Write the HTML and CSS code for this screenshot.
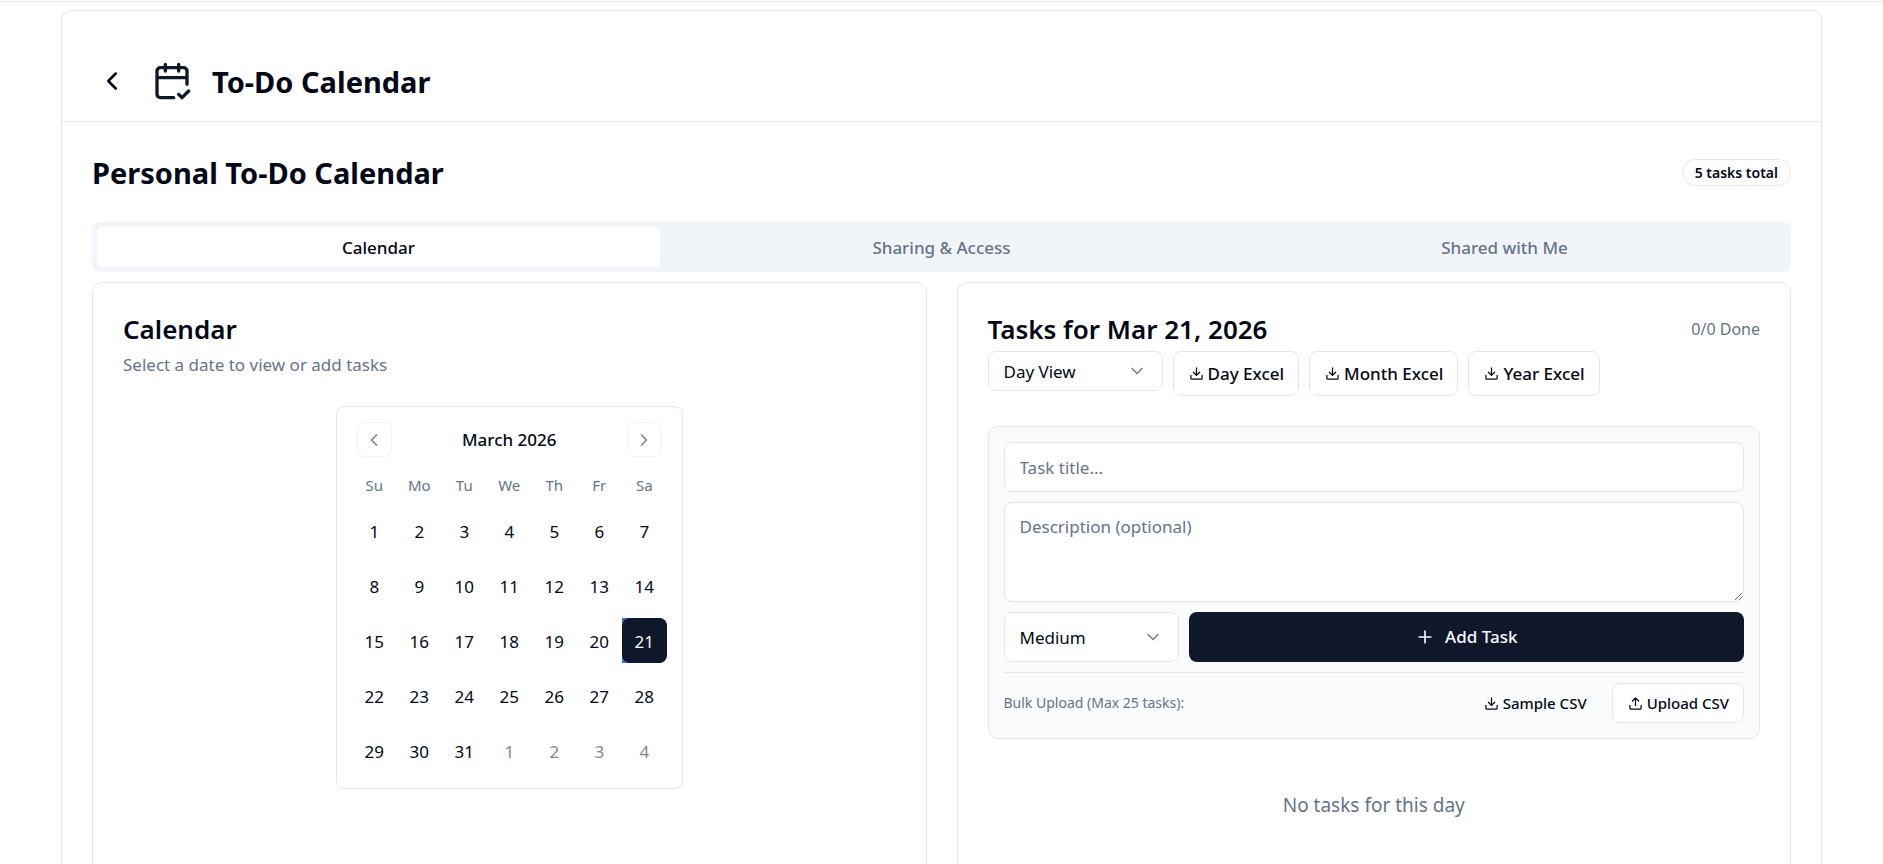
FILE: index.html
```html
<!DOCTYPE html>
<html lang="en">
<head>
<meta charset="utf-8">
<meta name="viewport" content="width=device-width, initial-scale=1">
<title>To-Do Calendar</title>
<link rel="stylesheet" href="styles.css">
</head>
<body>
<svg class="sprite" aria-hidden="true">
  <symbol id="chevron-left" viewBox="0 0 24 24"><path d="m15 18-6-6 6-6"/></symbol>
  <symbol id="chevron-right" viewBox="0 0 24 24"><path d="m9 18 6-6-6-6"/></symbol>
  <symbol id="chevron-down" viewBox="0 0 24 24"><path d="m6 9 6 6 6-6"/></symbol>
  <symbol id="calendar-check" viewBox="0 0 24 24"><path d="M8 2v4M16 2v4M21 14V6a2 2 0 0 0-2-2H5a2 2 0 0 0-2 2v14a2 2 0 0 0 2 2h8M3 10h18M16 20l2 2 4-4"/></symbol>
  <symbol id="download" viewBox="0 0 24 24"><path d="M21 15v4a2 2 0 0 1-2 2H5a2 2 0 0 1-2-2v-4M7 10l5 5 5-5M12 15V3"/></symbol>
  <symbol id="upload" viewBox="0 0 24 24"><path d="M21 15v4a2 2 0 0 1-2 2H5a2 2 0 0 1-2-2v-4M17 8l-5-5-5 5M12 3v12"/></symbol>
  <symbol id="plus" viewBox="0 0 24 24"><path d="M5 12h14M12 5v14"/></symbol>
</svg>
<div class="page">
  <main class="shell">
    <header class="shell-header">
      <button class="back" type="button" aria-label="Back"><svg class="icon icon-md"><use href="#chevron-left"/></svg></button>
      <svg class="icon icon-xl"><use href="#calendar-check"/></svg>
      <h1 class="heading">To-Do Calendar</h1>
    </header>
    <div class="shell-body">
      <div class="title-row">
        <h2 class="heading">Personal To-Do Calendar</h2>
        <span class="badge">5 tasks total</span>
      </div>
      <div class="tabs" role="tablist">
        <button class="tab tab-active" type="button" role="tab" aria-selected="true">Calendar</button>
        <button class="tab" type="button" role="tab" aria-selected="false">Sharing &amp; Access</button>
        <button class="tab" type="button" role="tab" aria-selected="false">Shared with Me</button>
      </div>
      <div class="columns">
        <section class="card">
          <h3 class="card-title">Calendar</h3>
          <p class="card-text">Select a date to view or add tasks</p>
          <div class="calendar">
            <div class="calendar-head">
              <button class="nav" type="button" aria-label="Previous month"><svg class="icon icon-md"><use href="#chevron-left"/></svg></button>
              <span class="month">March 2026</span>
              <button class="nav" type="button" aria-label="Next month"><svg class="icon icon-md"><use href="#chevron-right"/></svg></button>
            </div>
            <table class="days">
              <thead><tr><th>Su</th><th>Mo</th><th>Tu</th><th>We</th><th>Th</th><th>Fr</th><th>Sa</th></tr></thead>
              <tbody>
                <tr><td><button class="day">1</button></td><td><button class="day">2</button></td><td><button class="day">3</button></td><td><button class="day">4</button></td><td><button class="day">5</button></td><td><button class="day">6</button></td><td><button class="day">7</button></td></tr>
                <tr><td><button class="day">8</button></td><td><button class="day">9</button></td><td><button class="day">10</button></td><td><button class="day">11</button></td><td><button class="day">12</button></td><td><button class="day">13</button></td><td><button class="day">14</button></td></tr>
                <tr><td><button class="day">15</button></td><td><button class="day">16</button></td><td><button class="day">17</button></td><td><button class="day">18</button></td><td><button class="day">19</button></td><td><button class="day">20</button></td><td><div class="picked"><button class="day day-selected" aria-pressed="true">21</button></div></td></tr>
                <tr><td><button class="day">22</button></td><td><button class="day">23</button></td><td><button class="day">24</button></td><td><button class="day">25</button></td><td><button class="day">26</button></td><td><button class="day">27</button></td><td><button class="day">28</button></td></tr>
                <tr><td><button class="day">29</button></td><td><button class="day">30</button></td><td><button class="day">31</button></td><td><button class="day day-outside">1</button></td><td><button class="day day-outside">2</button></td><td><button class="day day-outside">3</button></td><td><button class="day day-outside">4</button></td></tr>
              </tbody>
            </table>
          </div>
        </section>
        <section class="card">
          <div class="tasks-head">
            <h3 class="card-title">Tasks for Mar 21, 2026</h3>
            <span class="done">0/0 Done</span>
          </div>
          <div class="toolbar">
            <div class="select select-short">
              <select aria-label="View"><option>Day View</option><option>Month View</option><option>Year View</option></select>
              <svg class="icon icon-md"><use href="#chevron-down"/></svg>
            </div>
            <button class="btn" type="button"><svg class="icon icon-sm"><use href="#download"/></svg>Day Excel</button>
            <button class="btn" type="button"><svg class="icon icon-sm"><use href="#download"/></svg>Month Excel</button>
            <button class="btn" type="button"><svg class="icon icon-sm"><use href="#download"/></svg>Year Excel</button>
          </div>
          <form class="task-form">
            <input class="field" type="text" placeholder="Task title..." aria-label="Task title">
            <textarea class="field field-area" placeholder="Description (optional)" aria-label="Description"></textarea>
            <div class="form-row">
              <div class="select">
                <select aria-label="Priority"><option>Low</option><option selected>Medium</option><option>High</option></select>
                <svg class="icon icon-md"><use href="#chevron-down"/></svg>
              </div>
              <button class="add" type="button"><svg class="icon icon-md"><use href="#plus"/></svg>Add Task</button>
            </div>
            <div class="bulk">
              <span class="bulk-label">Bulk Upload (Max 25 tasks):</span>
              <button class="btn btn-small btn-ghost" type="button"><svg class="icon icon-sm"><use href="#download"/></svg>Sample CSV</button>
              <button class="btn btn-small" type="button"><svg class="icon icon-sm"><use href="#upload"/></svg>Upload CSV</button>
            </div>
          </form>
          <p class="empty">No tasks for this day</p>
        </section>
      </div>
    </div>
  </main>
</div>
</body>
</html>
```
FILE: styles.css
```css
:root {
  --text: #020817;
  --muted: #64748b;
  --line: #e3e7ea;
  --primary: #0f172a;
  --surface: #f1f5f9;
}

* { box-sizing: border-box; }

body {
  margin: 0;
  background: #fff;
  color: var(--text);
  font: 400 17px/24px "Noto Sans", "Open Sans", sans-serif;
}

h1, h2, h3, p { margin: 0; }

button, input, textarea, select {
  font: inherit;
  color: inherit;
  margin: 0;
}

button { cursor: pointer; }

.sprite { display: none; }

.icon {
  flex: none;
  fill: none;
  stroke: currentColor;
  stroke-width: 2;
  stroke-linecap: round;
  stroke-linejoin: round;
}
.icon-sm { width: 15px; height: 15px; }
.icon-md { width: 20px; height: 20px; }
.icon-xl { width: 40px; height: 40px; color: var(--primary); }

.page {
  margin-top: 1px;
  border-top: 1px solid var(--line);
  padding: 8px 61px 30px;
}

.shell {
  border: 1px solid var(--line);
  border-radius: 10px;
}

.shell-header {
  display: flex;
  align-items: center;
  gap: 20px;
  padding: 50px 30px 20px;
  border-bottom: 1px solid var(--line);
}

.back {
  display: grid;
  place-items: center;
  width: 40px;
  height: 40px;
  padding: 0;
  border: 0;
  background: none;
}
.back .icon { width: 30px; height: 30px; }

.heading {
  height: 40px;
  font-size: 29px;
  line-height: 42px;
  font-weight: 700;
}

.shell-body { padding: 30px; }

.title-row {
  display: flex;
  align-items: center;
  justify-content: space-between;
  margin-bottom: 30px;
}

.badge {
  padding: 2px 12px;
  border: 1px solid var(--line);
  border-radius: 999px;
  font-size: 14px;
  line-height: 21px;
  font-weight: 600;
}

.tabs {
  display: grid;
  grid-template-columns: repeat(3, 1fr);
  padding: 5px;
  border-radius: 8px;
  background: var(--surface);
}

.tab {
  height: 40px;
  padding: 2px 0 0;
  border: 0;
  border-radius: 5px;
  background: none;
  color: var(--muted);
  font-weight: 500;
}
.tab-active { background: #fff; color: var(--text); }

.columns {
  display: grid;
  grid-template-columns: 1fr 1fr;
  gap: 30px;
  margin-top: 10px;
}

.card {
  padding: 30px;
  border: 1px solid var(--line);
  border-radius: 10px;
}

.card-title {
  font-size: 26px;
  line-height: 32px;
  font-weight: 600;
}

.card-text { margin-top: 8px; color: var(--muted); }

.calendar {
  width: fit-content;
  margin: 29px auto 0;
  padding: 15px;
  border: 1px solid var(--line);
  border-radius: 8px;
}

.calendar-head {
  display: flex;
  align-items: center;
  justify-content: space-between;
  padding: 0 5px;
  margin-bottom: 16px;
}

.month { font-weight: 500; }

.nav {
  display: grid;
  place-items: center;
  width: 35px;
  height: 35px;
  padding: 0;
  border: 1px solid var(--line);
  border-radius: 8px;
  background: none;
  opacity: 0.5;
}

.days { border-collapse: collapse; }
.days th {
  width: 45px;
  padding: 0;
  color: var(--muted);
  font-size: 15px;
  line-height: 25px;
  font-weight: 400;
}
.days td { padding: 10px 0 0; }

.day {
  display: block;
  width: 45px;
  height: 45px;
  padding: 2px 0 0;
  border: 0;
  border-radius: 8px;
  background: none;
}
.day-outside { color: #808896; }
.day-selected { background: var(--primary); color: #f8fafc; }
.picked { border-radius: 0 8px 8px 0; background: #3b6fd8; }

.tasks-head {
  display: flex;
  align-items: center;
  justify-content: space-between;
}
.done { color: var(--muted); font-size: 16px; }

.toolbar {
  display: flex;
  align-items: flex-start;
  gap: 10px;
  margin-top: 6px;
}

.select {
  display: grid;
  align-items: center;
  width: 175px;
  height: 50px;
}
.select select {
  grid-area: 1 / 1;
  appearance: none;
  width: 100%;
  height: 100%;
  padding: 1px 15px 0;
  border: 1px solid var(--line);
  border-radius: 8px;
  background: #fff;
}
.select .icon {
  grid-area: 1 / 1;
  justify-self: end;
  margin-right: 16px;
  opacity: 0.5;
  pointer-events: none;
}
.select-short { height: 40px; }

.btn {
  display: flex;
  align-items: center;
  gap: 4px;
  height: 45px;
  padding: 0 14px 0 15px;
  border: 1px solid var(--line);
  border-radius: 8px;
  background: #fff;
  font-weight: 500;
}
.btn-small { height: 40px; font-size: 15px; }
.btn-ghost { border-color: transparent; background: none; }

.task-form {
  display: grid;
  gap: 10px;
  margin-top: 30px;
  padding: 15px;
  border: 1px solid var(--line);
  border-radius: 10px;
  background: #fafbfd;
}

.field {
  display: block;
  width: 100%;
  height: 50px;
  padding: 0 15px;
  border: 1px solid var(--line);
  border-radius: 8px;
  background: #fff;
}
.field-area { height: 100px; padding: 12px 15px 10px; }
.field::placeholder { color: var(--muted); opacity: 1; }

.form-row { display: flex; gap: 10px; }

.add {
  display: flex;
  flex: 1;
  align-items: center;
  justify-content: center;
  gap: 10px;
  border: 0;
  border-radius: 8px;
  background: var(--primary);
  color: #f8fafc;
  font-weight: 500;
}

.bulk {
  display: flex;
  align-items: center;
  gap: 10px;
  padding-top: 10px;
  border-top: 1px solid var(--line);
}
.bulk-label { margin-right: auto; color: var(--muted); font-size: 14px; }

.empty {
  padding: 50px 0;
  color: var(--muted);
  font-size: 19px;
  line-height: 32px;
  text-align: center;
}
```
